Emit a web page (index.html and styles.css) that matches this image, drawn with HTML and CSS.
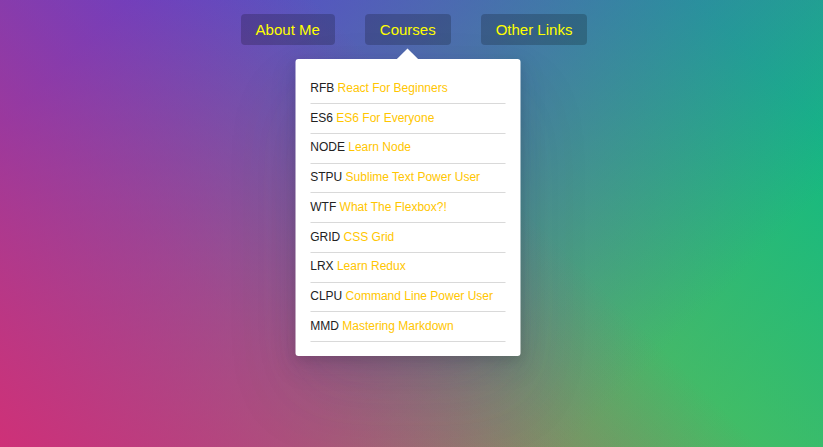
FILE: index.html
```html
<!DOCTYPE html>
<html lang="en">
<head>
<meta charset="utf-8">
<title>Follow Along Nav</title>
<link rel="stylesheet" href="styles.css">
</head>
<body>
<nav class="top">
  <ul class="cool">
    <li><a class="trigger" href="#">About Me</a></li>
    <li class="has-dropdown">
      <a class="trigger" href="#">Courses</a>
      <ul class="dropdown courses">
        <li><span class="code">RFB</span> <a href="#">React For Beginners</a></li>
        <li><span class="code">ES6</span> <a href="#">ES6 For Everyone</a></li>
        <li><span class="code">NODE</span> <a href="#">Learn Node</a></li>
        <li><span class="code">STPU</span> <a href="#">Sublime Text Power User</a></li>
        <li><span class="code">WTF</span> <a href="#">What The Flexbox?!</a></li>
        <li><span class="code">GRID</span> <a href="#">CSS Grid</a></li>
        <li><span class="code">LRX</span> <a href="#">Learn Redux</a></li>
        <li><span class="code">CLPU</span> <a href="#">Command Line Power User</a></li>
        <li><span class="code">MMD</span> <a href="#">Mastering Markdown</a></li>
      </ul>
    </li>
    <li><a class="trigger" href="#">Other Links</a></li>
  </ul>
</nav>
</body>
</html>
```

FILE: styles.css
```css
html {
  box-sizing: border-box;
  font-family: "Liberation Sans", Arial, sans-serif;
}
*, *::before, *::after { box-sizing: inherit; }

body {
  margin: 0;
  min-height: 100vh;
  background:
    linear-gradient(45deg, hsla(333, 62%, 50%, 1) 0%, hsla(333, 62%, 50%, 0) 60%),
    linear-gradient(135deg, hsla(248, 60%, 54%, 1) 10%, hsla(248, 60%, 54%, 0) 80%),
    linear-gradient(225deg, hsla(160, 82%, 40%, 1) 10%, hsla(160, 82%, 40%, 0) 72%),
    linear-gradient(309deg, hsla(100, 48%, 52%, 1) 10%, hsla(75, 30%, 52%, 0.5) 70%);
  background-color: #8a7080;
}

.cool {
  list-style: none;
  margin: 0;
  padding: 0 0 0 5px;
  display: flex;
  justify-content: center;
}

.cool > li {
  position: relative;
  display: flex;
  justify-content: center;
}

.trigger {
  display: inline-block;
  margin: 14px 15px;
  padding: 7px 15px;
  font-size: 15px;
  line-height: 17.25px;
  color: #ffff00;
  text-decoration: none;
  background: rgba(0, 0, 0, 0.2);
  border-radius: 4px;
}

.dropdown {
  position: absolute;
  top: 100%;
  left: 50%;
  transform: translateX(-50%);
  width: 225px;
  margin: 0;
  padding: 15px 15px 14px;
  list-style: none;
  background: #fff;
  border-radius: 3px;
  box-shadow:
    0 38px 75px rgba(50, 50, 93, 0.1),
    0 11px 26px rgba(50, 50, 93, 0.15),
    0 4px 11px rgba(0, 0, 0, 0.1);
}

.dropdown::before {
  content: "";
  position: absolute;
  top: 0;
  left: 50%;
  width: 15px;
  height: 15px;
  background: #fff;
  transform: translate(-50%, -50%) rotate(45deg);
}

.dropdown li {
  display: block;
  padding: 7.5px 0;
  font-size: 12px;
  line-height: 13.75px;
  color: #222;
  border-bottom: 1px solid #d9d9d9;
  white-space: nowrap;
}

.dropdown a {
  color: #ffc600;
  text-decoration: none;
}
```
